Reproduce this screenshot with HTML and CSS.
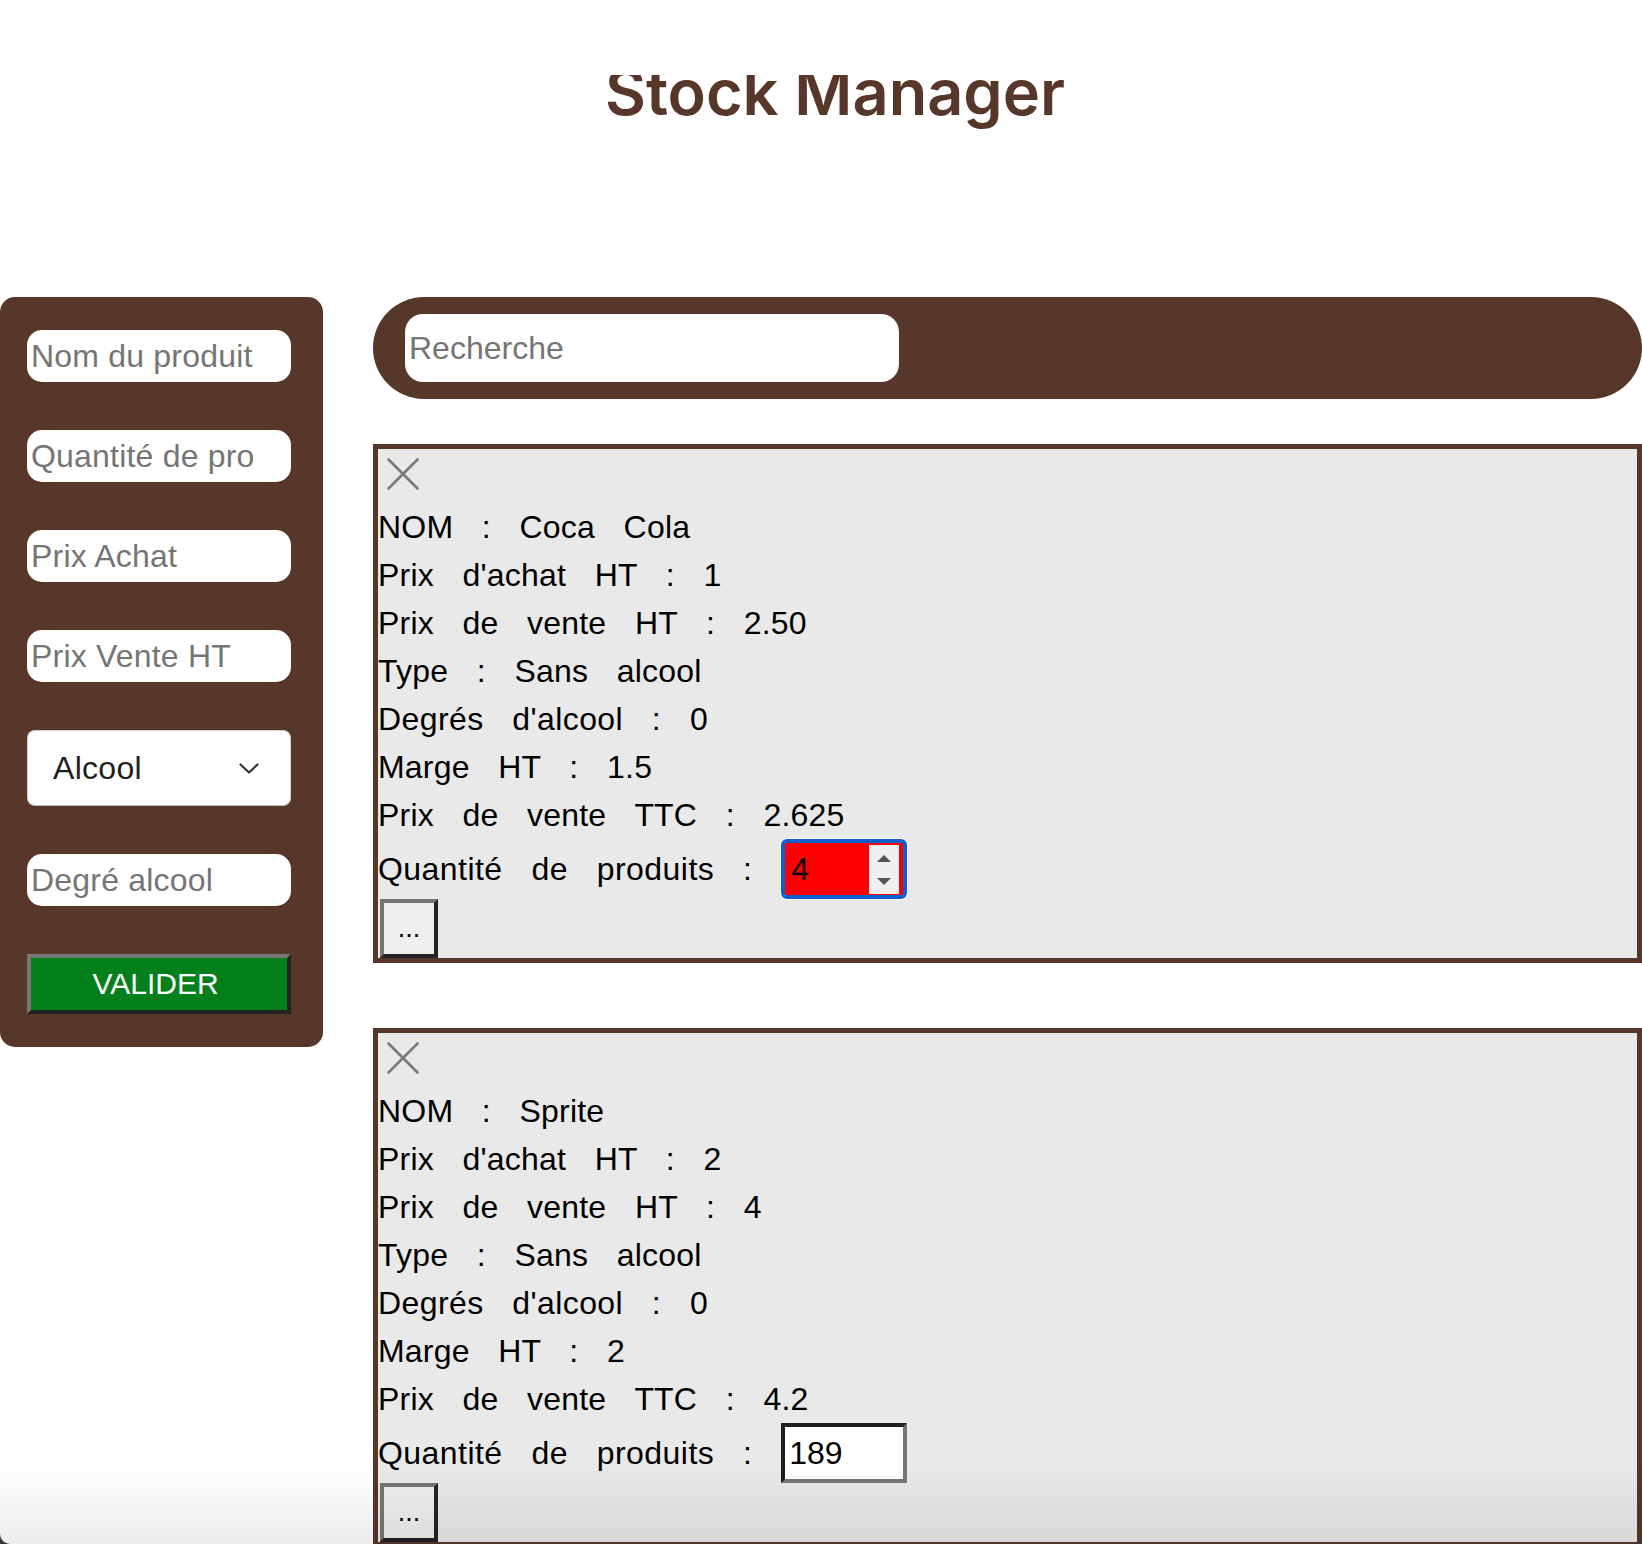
FILE: index.html
```html
<!DOCTYPE html>
<html lang="fr">
<head>
<meta charset="utf-8">
<title>Stock Manager</title>
<link rel="stylesheet" href="styles.css">
</head>
<body>
<header class="header">
  <div class="title-clip"><h1 class="title">Stock Manager</h1></div>
</header>
<div class="layout">
  <form class="sidebar">
    <input class="field" type="text" placeholder="Nom du produit">
    <input class="field" type="text" placeholder="Quantité de produits">
    <input class="field" type="text" placeholder="Prix Achat">
    <input class="field" type="text" placeholder="Prix Vente HT">
    <div class="select-wrap">
      <select class="select"><option>Alcool</option><option>Sans alcool</option></select>
      <svg class="chevron" width="20" height="11" viewBox="0 0 20 11"><polyline points="1.5,1.5 10,9.5 18.5,1.5" fill="none" stroke="#333" stroke-width="2.2" stroke-linecap="round" stroke-linejoin="round"/></svg>
    </div>
    <input class="field" type="text" placeholder="Degré alcool">
    <button type="button" class="validate">VALIDER</button>
  </form>
  <main class="main">
    <div class="searchbar"><input class="search" type="text" placeholder="Recherche"></div>
    <div class="cards">
      <article class="card">
        <div class="close"><svg width="32" height="32" viewBox="0 0 32 32"><line x1="1.5" y1="1.5" x2="30.5" y2="30.5"/><line x1="30.5" y1="1.5" x2="1.5" y2="30.5"/></svg></div>
        <p class="line">NOM : Coca Cola</p>
        <p class="line">Prix d'achat HT : 1</p>
        <p class="line">Prix de vente HT : 2.50</p>
        <p class="line">Type : Sans alcool</p>
        <p class="line wide">Degrés d'alcool : 0</p>
        <p class="line">Marge HT : 1.5</p>
        <p class="line">Prix de vente TTC : 2.625</p>
        <p class="line qty-line">Quantité de produits : <span class="qty-wrap"><input class="qty-input" type="text" value="4"><span class="spin"><span class="tri-up"></span><span class="tri-down"></span></span></span></p>
        <button type="button" class="more">...</button>
      </article>
      <article class="card">
        <div class="close"><svg width="32" height="32" viewBox="0 0 32 32"><line x1="1.5" y1="1.5" x2="30.5" y2="30.5"/><line x1="30.5" y1="1.5" x2="1.5" y2="30.5"/></svg></div>
        <p class="line">NOM : Sprite</p>
        <p class="line">Prix d'achat HT : 2</p>
        <p class="line">Prix de vente HT : 4</p>
        <p class="line">Type : Sans alcool</p>
        <p class="line wide">Degrés d'alcool : 0</p>
        <p class="line">Marge HT : 2</p>
        <p class="line">Prix de vente TTC : 4.2</p>
        <p class="line qty-line">Quantité de produits : <input class="qty" type="text" value="189"></p>
        <button type="button" class="more">...</button>
      </article>
    </div>
  </main>
</div>
<div class="bottom-fade"></div>
<div class="window-corners"></div>
</body>
</html>
```
FILE: styles.css
```css
* { box-sizing: border-box; }

body {
  margin: 0;
  background: #fff;
  color: #000;
  font-family: "Liberation Sans", Arial, sans-serif;
}

.header {
  height: 297px;
  padding-top: 75px;
}

.title-clip {
  overflow: hidden;
  height: 62px;
  text-align: center;
  padding-left: 28px;
}

.title {
  margin: -14px 0 0;
  font-family: Inter, "Liberation Sans", sans-serif;
  font-weight: 600;
  font-size: 63px;
  line-height: 63px;
  color: #563729;
}

.layout {
  display: flex;
  align-items: flex-start;
  gap: 50px;
}

.sidebar {
  flex: 0 0 323px;
  background: #563729;
  border-radius: 15px;
  padding: 33px 32px 33px 27px;
  display: flex;
  flex-direction: column;
  gap: 48px;
}

.field {
  width: 100%;
  height: 52px;
  border: none;
  border-radius: 15px;
  padding: 0 36px 0 4px;
  background: #fff;
  color: #000;
  font-family: "Liberation Sans", Arial, sans-serif;
  font-size: 32px;
  letter-spacing: 0.2px;
  outline: none;
}

.field::placeholder,
.search::placeholder { color: #757575; }

.select-wrap {
  position: relative;
}

.select {
  -webkit-appearance: none;
  appearance: none;
  width: 100%;
  height: 76px;
  border: 1px solid #d2d2d2;
  border-bottom-color: #bcbcbc;
  border-radius: 8px;
  background: #fff;
  padding: 0 0 0 25px;
  color: #1f1f1f;
  font-family: "Liberation Sans", Arial, sans-serif;
  font-size: 32px;
  letter-spacing: 0.3px;
  outline: none;
}

.chevron {
  position: absolute;
  right: 32px;
  top: 33px;
  pointer-events: none;
}

.validate {
  width: 100%;
  height: 60px;
  padding: 0 7px 0 0;
  border: 4px solid;
  border-color: #777 #222 #222 #777;
  background: #03801c;
  color: #fff;
  font-family: "Liberation Sans", Arial, sans-serif;
  font-size: 30px;
}

.main {
  flex: 1;
  min-width: 0;
}

.searchbar {
  height: 102px;
  border-radius: 51px;
  background: #563729;
  padding-left: 32px;
  display: flex;
  align-items: center;
}

.search {
  width: 494px;
  height: 68px;
  border: none;
  border-radius: 18px;
  padding: 0 4px;
  background: #fff;
  font-family: "Liberation Sans", Arial, sans-serif;
  font-size: 32px;
  outline: none;
}

.cards {
  margin-top: 45px;
  display: flex;
  flex-direction: column;
  gap: 65px;
}

.card {
  border: 5px solid #563729;
  background: #e9e9e9;
}

.close {
  height: 54px;
  padding: 9px 0 0 9px;
}

.close svg {
  display: block;
  stroke: #7a7a7a;
  stroke-width: 2.6;
  stroke-linecap: round;
}

.line {
  margin: 0;
  font-size: 32px;
  line-height: 48px;
  letter-spacing: 0.2px;
  word-spacing: 19.5px;
  white-space: nowrap;
}

.line.wide { letter-spacing: 0.4px; }

.qty-line { letter-spacing: 0.45px; }

.qty-wrap {
  display: inline-flex;
  vertical-align: baseline;
  width: 126px;
  height: 60px;
  border: 4px solid #0b5fd0;
  border-radius: 6px;
  background: #ff0000;
  box-shadow: 0 0 0 1px #fff;
  padding: 2px 4px 1px 0;
  word-spacing: normal;
  letter-spacing: normal;
}

.qty-input {
  flex: 1;
  min-width: 0;
  border: none;
  background: transparent;
  padding: 0 0 0 6px;
  font-family: "Liberation Sans", Arial, sans-serif;
  font-size: 32px;
  letter-spacing: normal;
  color: #000;
  outline: none;
}

.spin {
  flex: 0 0 30px;
  background: #f0f0f0;
  display: flex;
  flex-direction: column;
  align-items: center;
  justify-content: center;
  gap: 16px;
}

.tri-up,
.tri-down {
  width: 0;
  height: 0;
  border-left: 7px solid transparent;
  border-right: 7px solid transparent;
}

.tri-up { border-bottom: 7px solid #555; }
.tri-down { border-top: 7px solid #555; }

.qty {
  width: 126px;
  height: 60px;
  vertical-align: baseline;
  border: 4px solid;
  border-color: #1e1e1e #767676 #767676 #1e1e1e;
  background: #fff;
  padding: 0 4px;
  font-family: "Liberation Sans", Arial, sans-serif;
  font-size: 32px;
  letter-spacing: normal;
  word-spacing: normal;
  color: #000;
  outline: none;
}

.more {
  display: block;
  width: 58px;
  height: 59px;
  margin-left: 2px;
  padding: 0;
  border: 4px solid;
  border-color: #767676 #232323 #232323 #767676;
  background: #efefef;
  color: #000;
  font-family: "Liberation Sans", Arial, sans-serif;
  font-size: 27px;
}

.bottom-fade {
  position: fixed;
  left: 0;
  right: 0;
  bottom: 0;
  height: 80px;
  background: linear-gradient(rgba(0, 0, 0, 0), rgba(0, 0, 0, 0.07));
  pointer-events: none;
}

.window-corners {
  position: fixed;
  inset: 0;
  border-radius: 0 0 10px 10px;
  box-shadow: 0 0 0 40px #3d3440;
  pointer-events: none;
}
```
